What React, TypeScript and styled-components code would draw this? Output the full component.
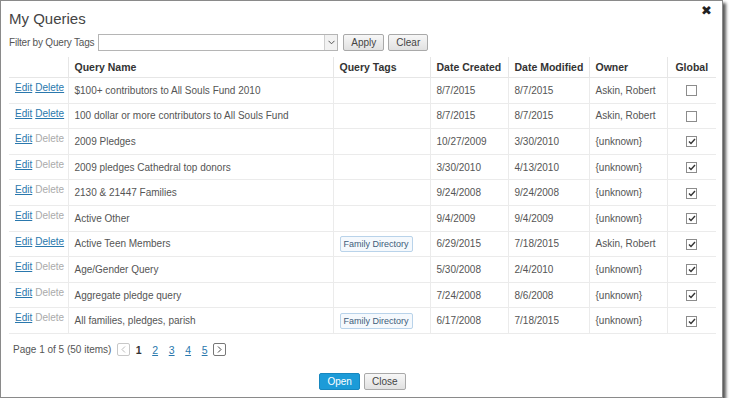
import React from 'react';
import styled, { createGlobalStyle } from 'styled-components';

const GlobalStyle = createGlobalStyle`
	html, body {
		margin: 0;
		padding: 0;
		background: #fff;
	}
	body {
		font-family: 'Liberation Sans', Arial, sans-serif;
		font-size: 10px;
		color: #555;
	}
`;

const Window = styled.div`
	box-sizing: border-box;
	width: 723px;
	height: 398px;
	border: 1px solid #8a8a8a;
	background: #fff;
	box-shadow: 3px 3px 3px rgba(0, 0, 0, 0.65);
	display: flex;
	flex-direction: column;
	padding: 0 6px 0 8px;
`;

const TitleBar = styled.div`
	display: flex;
	justify-content: space-between;
	align-items: flex-start;
	height: 30px;
`;

const Title = styled.h1`
	margin: 8px 0 0 0;
	font-family: 'Liberation Sans', Arial, sans-serif;
	font-weight: 400;
	font-size: 15px;
	color: #444;
	line-height: 20px;
`;

const CloseX = styled.span`
	margin: 3px 4px 0 0;
	font-family: 'DejaVu Sans', sans-serif;
	font-weight: 700;
	font-size: 13px;
	color: #222;
	line-height: 14px;
`;

const FilterRow = styled.div`
	display: flex;
	align-items: center;
	gap: 4px;
	height: 17px;
	margin-top: 3px;
`;

const FilterLabel = styled.span`
	font-size: 10px;
	letter-spacing: -0.2px;
	color: #555;
`;

const SelectBox = styled.div`
	box-sizing: border-box;
	width: 240px;
	height: 17px;
	border: 1px solid #b5b5b5;
	display: flex;
	justify-content: flex-end;
	margin-right: 1px;
`;

const SelectArrow = styled.div`
	width: 12px;
	border-left: 1px solid #cfcfcf;
	background: #f2f2f2;
	display: flex;
	align-items: center;
	justify-content: center;
`;

const Button = styled.button<{ $primary?: boolean }>`
	box-sizing: border-box;
	height: 17px;
	padding: 0 7px;
	font-family: 'Liberation Sans', Arial, sans-serif;
	font-size: 10px;
	border-radius: 2px;
	cursor: pointer;
	line-height: 14px;
	color: ${(p) => (p.$primary ? '#fff' : '#444')};
	border: 1px solid ${(p) => (p.$primary ? '#1787bf' : '#a9a9a9')};
	background: ${(p) => (p.$primary ? '#1c9bd8' : 'linear-gradient(#f7f7f7, #e1e1e1)')};
`;

const Table = styled.table`
	border-collapse: collapse;
	margin-top: 6px;
	width: 707px;
	table-layout: fixed;
`;

const HeadCell = styled.th<{ $center?: boolean }>`
	text-align: ${(p) => (p.$center ? 'center' : 'left')};
	font-weight: 700;
	color: #333;
	font-size: 10.5px;
	height: 20px;
	padding: 0 6px;
	white-space: nowrap;
	border-bottom: 1px solid #e6e6e6;
	border-left: 1px solid #e6e6e6;
	&:first-child {
		border-left: none;
	}
`;

const Row = styled.tr`
	height: 25.6px;
	border-bottom: 1px solid #ebebeb;
`;

const Cell = styled.td<{ $center?: boolean }>`
	padding: 0 6px;
	text-align: ${(p) => (p.$center ? 'center' : 'left')};
	border-left: 1px solid #ebebeb;
	white-space: nowrap;
	overflow: hidden;
	color: #555;
	font-size: 10px;
`;

const ActionCell = styled.td`
	padding: 4px 6px 0 6px;
	vertical-align: top;
	white-space: nowrap;
	font-size: 10px;
`;

const Link = styled.a<{ $disabled?: boolean }>`
	color: ${(p) => (p.$disabled ? '#aaa' : '#2a78ad')};
	text-decoration: ${(p) => (p.$disabled ? 'none' : 'underline')};
	margin-right: 3px;
	cursor: pointer;
`;

const Tag = styled.span`
	display: inline-block;
	padding: 1px 3px;
	border: 1px solid #b9d3ea;
	border-radius: 2px;
	background: #f5f9fd;
	color: #3d5d7a;
	font-size: 9px;
	line-height: 12px;
`;

const Check = styled.span`
	display: inline-flex;
	box-sizing: border-box;
	width: 11px;
	height: 11px;
	border: 1px solid #8c8c8c;
	background: #fff;
	align-items: center;
	justify-content: center;
	vertical-align: middle;
`;

const Pager = styled.div`
	display: flex;
	align-items: center;
	height: 16px;
	margin: 8px 0 0 4px;
`;

const PagerInfo = styled.span`
	margin-right: 6px;
	color: #555;
`;

const PageArrow = styled.span<{ $active?: boolean }>`
	box-sizing: border-box;
	width: 13px;
	height: 13px;
	border: 1px solid ${(p) => (p.$active ? '#777' : '#c8c8c8')};
	border-radius: 2px;
	display: inline-flex;
	align-items: center;
	justify-content: center;
`;

const PageNum = styled.span<{ $current?: boolean }>`
	width: 16.5px;
	text-align: center;
	font-weight: ${(p) => (p.$current ? 700 : 400)};
	color: ${(p) => (p.$current ? '#333' : '#2a78ad')};
	text-decoration: ${(p) => (p.$current ? 'none' : 'underline')};
	font-size: 10.5px;
`;

const Footer = styled.div`
	display: flex;
	justify-content: center;
	gap: 4px;
	margin-top: auto;
	margin-bottom: 7px;
`;

type Query = {
	name: string;
	canDelete: boolean;
	tag?: string;
	created: string;
	modified: string;
	owner: string;
	global: boolean;
};

const queries: Query[] = [
	{ name: '$100+ contributors to All Souls Fund 2010', canDelete: true, created: '8/7/2015', modified: '8/7/2015', owner: 'Askin, Robert', global: false },
	{ name: '100 dollar or more contributors to All Souls Fund', canDelete: true, created: '8/7/2015', modified: '8/7/2015', owner: 'Askin, Robert', global: false },
	{ name: '2009 Pledges', canDelete: false, created: '10/27/2009', modified: '3/30/2010', owner: '{unknown}', global: true },
	{ name: '2009 pledges Cathedral top donors', canDelete: false, created: '3/30/2010', modified: '4/13/2010', owner: '{unknown}', global: true },
	{ name: '2130 & 21447 Families', canDelete: false, created: '9/24/2008', modified: '9/24/2008', owner: '{unknown}', global: true },
	{ name: 'Active Other', canDelete: false, created: '9/4/2009', modified: '9/4/2009', owner: '{unknown}', global: true },
	{ name: 'Active Teen Members', canDelete: true, tag: 'Family Directory', created: '6/29/2015', modified: '7/18/2015', owner: 'Askin, Robert', global: true },
	{ name: 'Age/Gender Query', canDelete: false, created: '5/30/2008', modified: '2/4/2010', owner: '{unknown}', global: true },
	{ name: 'Aggregate pledge query', canDelete: false, created: '7/24/2008', modified: '8/6/2008', owner: '{unknown}', global: true },
	{ name: 'All families, pledges, parish', canDelete: false, tag: 'Family Directory', created: '6/17/2008', modified: '7/18/2015', owner: '{unknown}', global: true },
];

const Tick = () => (
	<svg width="8" height="7" viewBox="0 0 8 7">
		<path d="M1 3.5 L3 5.5 L7 1" stroke="#333" strokeWidth="1.4" fill="none" />
	</svg>
);

const App = () => (
	<>
		<GlobalStyle />
		<Window>
			<TitleBar>
				<Title>My Queries</Title>
				<CloseX>✖</CloseX>
			</TitleBar>
			<FilterRow>
				<FilterLabel>Filter by Query Tags</FilterLabel>
				<SelectBox>
					<SelectArrow>
						<svg width="7" height="5" viewBox="0 0 7 5">
							<path d="M0.5 0.8 L3.5 3.8 L6.5 0.8" stroke="#555" strokeWidth="1" fill="none" />
						</svg>
					</SelectArrow>
				</SelectBox>
				<Button>Apply</Button>
				<Button>Clear</Button>
			</FilterRow>
			<Table>
				<colgroup>
					<col style={{ width: 59 }} />
					<col style={{ width: 265 }} />
					<col style={{ width: 97 }} />
					<col style={{ width: 78 }} />
					<col style={{ width: 81 }} />
					<col style={{ width: 78 }} />
					<col style={{ width: 49 }} />
				</colgroup>
				<thead>
					<tr>
						<HeadCell />
						<HeadCell>Query Name</HeadCell>
						<HeadCell>Query Tags</HeadCell>
						<HeadCell>Date Created</HeadCell>
						<HeadCell>Date Modified</HeadCell>
						<HeadCell>Owner</HeadCell>
						<HeadCell $center>Global</HeadCell>
					</tr>
				</thead>
				<tbody>
					{queries.map((q) => (
						<Row key={q.name}>
							<ActionCell>
								<Link>Edit</Link>
								<Link $disabled={!q.canDelete}>Delete</Link>
							</ActionCell>
							<Cell>{q.name}</Cell>
							<Cell>{q.tag && <Tag>{q.tag}</Tag>}</Cell>
							<Cell>{q.created}</Cell>
							<Cell>{q.modified}</Cell>
							<Cell>{q.owner}</Cell>
							<Cell $center>
								<Check>{q.global && <Tick />}</Check>
							</Cell>
						</Row>
					))}
				</tbody>
			</Table>
			<Pager>
				<PagerInfo>Page 1 of 5 (50 items)</PagerInfo>
				<PageArrow>
					<svg width="5" height="7" viewBox="0 0 5 7">
						<path d="M4 0.5 L1 3.5 L4 6.5" stroke="#bbb" strokeWidth="1" fill="none" />
					</svg>
				</PageArrow>
				<PageNum $current>1</PageNum>
				<PageNum>2</PageNum>
				<PageNum>3</PageNum>
				<PageNum>4</PageNum>
				<PageNum>5</PageNum>
				<PageArrow $active>
					<svg width="5" height="7" viewBox="0 0 5 7">
						<path d="M1 0.5 L4 3.5 L1 6.5" stroke="#444" strokeWidth="1" fill="none" />
					</svg>
				</PageArrow>
			</Pager>
			<Footer>
				<Button $primary>Open</Button>
				<Button>Close</Button>
			</Footer>
		</Window>
	</>
);

export default App;
